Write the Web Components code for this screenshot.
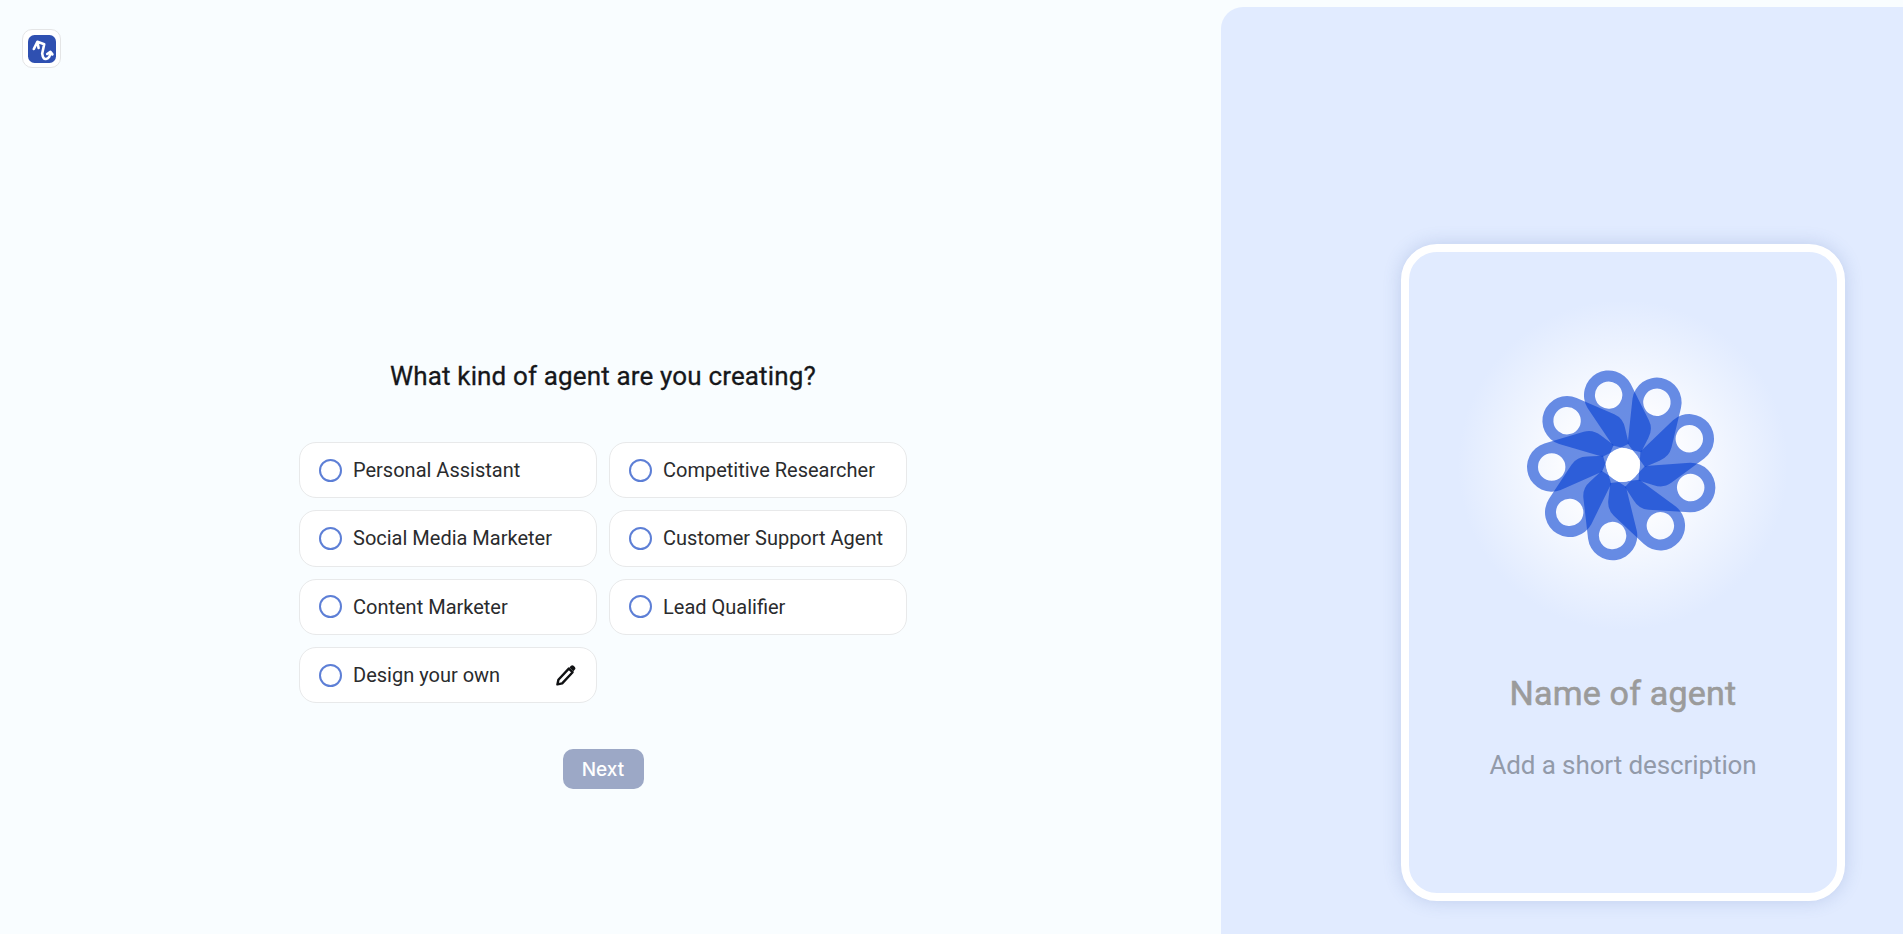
<!DOCTYPE html>
<html>
<head>
<meta charset="utf-8">
<title>Create agent</title>
<style>
  html, body { margin: 0; height: 100%; overflow: hidden; }
  body { background: #f9fdff; font-family: Roboto, "Liberation Sans", sans-serif; }
</style>
</head>
<body>
<agent-wizard></agent-wizard>

<script>
class AppLogo extends HTMLElement {
  constructor() {
    super();
    this.shadowDOM = this.attachShadow({ mode: "open" });
  }

  connectedCallback() {
    this.shadowDOM.innerHTML = `
    <style>
      :host { display: flex; align-items: center; justify-content: center; width: 39px; height: 39px;
        box-sizing: border-box; background: #fff; border: 1px solid #e4e5e6; border-radius: 10px; }
      svg { display: block; }
    </style>
    <svg width="28" height="28" viewBox="0 0 28 28">
      <rect width="28" height="28" rx="6.5" fill="#2f50b1"/>
      <path d="M5.8 14 L9.4 6.8 L16.2 9.2 L14.2 18.6 C14.6 21.6 16 24.2 18 24 C20.4 23.8 22.4 21 22.4 17.8 M19.2 19 L22.4 16.8 L24.4 19.4 M9.4 6.8 L10.6 13"
        fill="none" stroke="#fff" stroke-width="2.6" stroke-linecap="round" stroke-linejoin="round"/>
    </svg>`;
  }
}
customElements.define("app-logo", AppLogo);

class AgentOption extends HTMLElement {
  constructor() {
    super();
    this.shadowDOM = this.attachShadow({ mode: "open" });
  }

  connectedCallback() {
    this.shadowDOM.innerHTML = `
    <style>
      :host { display: flex; align-items: center; gap: 11px; box-sizing: border-box; height: 56.33px;
        padding: 0 20px 0 19px; background: #fff; border: 1px solid #e8e9ea; border-radius: 17px;
        font-size: 20px; color: #2a2b2d; }
      .radio { flex: none; width: 23px; height: 23px; box-sizing: border-box; border: 2px solid #5d7fd6; border-radius: 50%; }
      .label { flex: 1; white-space: nowrap; }
      ::slotted(svg) { flex: none; display: block; }
    </style>
    <span class="radio"></span>
    <span class="label">${this.getAttribute("label")}</span>
    <slot></slot>`;
  }
}
customElements.define("agent-option", AgentOption);

class NextButton extends HTMLElement {
  constructor() {
    super();
    this.shadowDOM = this.attachShadow({ mode: "open" });
  }

  connectedCallback() {
    this.shadowDOM.innerHTML = `
    <style>
      :host { display: block; }
      button { display: block; width: 81px; height: 40px; padding: 0; border: 0; border-radius: 10px;
        background: #9ca8c6; color: #fff; font: 500 19px Inter, Roboto, sans-serif; }
    </style>
    <button type="button"><slot></slot></button>`;
  }
}
customElements.define("next-button", NextButton);

class AgentForm extends HTMLElement {
  constructor() {
    super();
    this.shadowDOM = this.attachShadow({ mode: "open" });
  }

  connectedCallback() {
    this.shadowDOM.innerHTML = `
    <style>
      :host { display: flex; flex-direction: column; align-items: center; width: 608px; }
      h1 { margin: 0 0 48px; font-size: 26px; line-height: 36px; font-weight: 400; -webkit-text-stroke: .3px #16171a;
        letter-spacing: .15px; color: #16171a; white-space: nowrap; }
      .options { display: grid; grid-template-columns: 298px 298px; gap: 12px; margin-bottom: 46px; }
    </style>
    <h1>What kind of agent are you creating?</h1>
    <div class="options">
      <agent-option label="Personal Assistant"></agent-option>
      <agent-option label="Competitive Researcher"></agent-option>
      <agent-option label="Social Media Marketer"></agent-option>
      <agent-option label="Customer Support Agent"></agent-option>
      <agent-option label="Content Marketer"></agent-option>
      <agent-option label="Lead Qualifier"></agent-option>
      <agent-option label="Design your own">
        <svg width="20" height="21" viewBox="0 0 20 21">
          <path d="M1.4 19.4 L2.4 14.8 L12.8 3.6 L16.6 7.2 L6.2 18.4 Z" fill="none" stroke="#101113" stroke-width="2.4" stroke-linejoin="round"/>
          <path d="M13.4 2.4 L15 .8 C15.8 .1 16.8 .1 17.6 .8 L18.8 1.9 C19.6 2.7 19.6 3.7 18.9 4.5 L17.4 6.2 Z" fill="#101113"/>
        </svg>
      </agent-option>
    </div>
    <next-button>Next</next-button>`;
  }
}
customElements.define("agent-form", AgentForm);

class FlowerMark extends HTMLElement {
  constructor() {
    super();
    this.shadowDOM = this.attachShadow({ mode: "open" });
  }

  connectedCallback() {
    // nine petals, each one rotated 40deg from the last
    const petals = Array.from({ length: 9 }, (_, i) =>
      `<use href="#petal" transform="rotate(${i * 40})"/>`).join("");
    this.shadowDOM.innerHTML = `
    <style>
      :host { display: flex; align-items: center; justify-content: center; width: 330px; height: 330px;
        background: radial-gradient(circle closest-side, #fff 0%, #fbfcff 35%, #f0f5ff 62%, #e1ebff 100%); border-radius: 50%; }
      svg { display: block; filter: blur(.3px); }
    </style>
    <svg width="200" height="200" viewBox="-100 -100 200 200">
      <defs>
        <path id="petal" fill-rule="evenodd" d="M-78.6 -21.6 L-39.3 -33.3 Q-30 -36 -22 -29.5 L-9.3 -20 L-21 6.7 L-62.3 25 A24.7 24.7 0 1 1 -78.6 -21.6 Z
          M-85 2 A13.7 13.7 0 1 0 -57.6 2 A13.7 13.7 0 1 0 -85 2 Z"/>
      </defs>
      <g fill="#003cd0" fill-opacity=".58">${petals}</g>
      <circle r="17" fill="#fff"/>
    </svg>`;
  }
}
customElements.define("flower-mark", FlowerMark);

class AgentPreview extends HTMLElement {
  constructor() {
    super();
    this.shadowDOM = this.attachShadow({ mode: "open" });
  }

  connectedCallback() {
    this.shadowDOM.innerHTML = `
    <style>
      :host { display: flex; flex-direction: column; align-items: center; box-sizing: border-box; width: 444px; height: 657px;
        padding-top: 48px; border: 8px solid #fff; border-radius: 36px; box-shadow: 0 0 18px rgba(70, 100, 170, .22); background: #e1ebff; }
      h2 { margin: 41px 0 0; font-size: 34px; line-height: 44px; font-weight: 400; -webkit-text-stroke: .6px #9b9b9b; color: #9b9b9b; letter-spacing: .2px; }
      p { margin: 34px 0 0; font-size: 26px; line-height: 32px; color: #929aa9; letter-spacing: -.1px; }
    </style>
    <flower-mark></flower-mark>
    <h2>Name of agent</h2>
    <p>Add a short description</p>`;
  }
}
customElements.define("agent-preview", AgentPreview);

class AgentWizard extends HTMLElement {
  constructor() {
    super();
    this.shadowDOM = this.attachShadow({ mode: "open" });
  }

  connectedCallback() {
    this.shadowDOM.innerHTML = `
    <style>
      :host { display: flex; height: 100vh; }
      .left { flex: 0 0 1221px; box-sizing: border-box; padding: 29px 0 0 22px; }
      .left agent-form { margin: 290px 0 0 277px; }
      .right { flex: 1; display: flex; justify-content: flex-end; align-items: flex-start; box-sizing: border-box;
        margin-top: 7px; padding: 237px 58px 0 0; background: #e1ebff; border-radius: 22px 0 0 0; }
    </style>
    <div class="left">
      <app-logo></app-logo>
      <agent-form></agent-form>
    </div>
    <div class="right">
      <agent-preview></agent-preview>
    </div>`;
  }
}
customElements.define("agent-wizard", AgentWizard);
</script>
</body>
</html>
